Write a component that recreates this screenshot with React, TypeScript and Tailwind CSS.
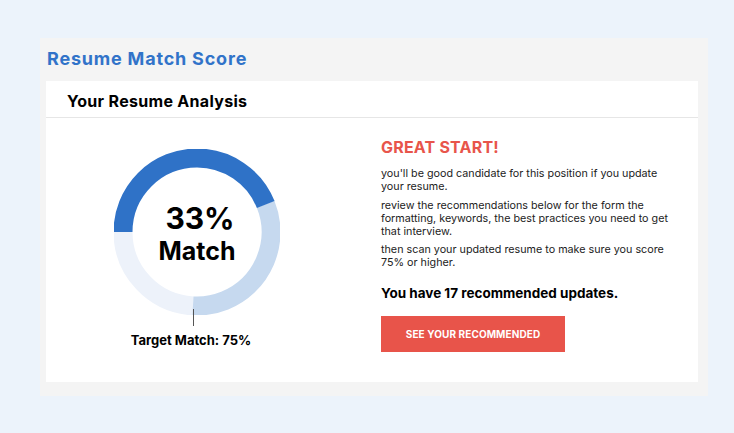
import React from "react"

const R = 74
const STROKE = 19
const C = 2 * Math.PI * R

function Arc({ from, to, color }: { from: number; to: number; color: string }) {
  const len = ((to - from) / 360) * C
  return (
    <circle
      cx={83}
      cy={83}
      r={R}
      fill="none"
      stroke={color}
      strokeWidth={STROKE}
      strokeDasharray={`${len} ${C}`}
      transform={`rotate(${from} 83 83)`}
    />
  )
}

function Donut() {
  return (
    <div className="relative w-[166px] h-[166px]">
      <svg width="166" height="166" viewBox="0 0 166 166">
        <Arc from={93} to={180} color="#edf2fa" />
        <Arc from={338} to={453} color="#c6d9ef" />
        <Arc from={180} to={338} color="#2f72c7" />
      </svg>
      <div className="absolute inset-0 flex flex-col items-center justify-center pt-[2px] font-bold text-black">
        <span className="text-[30px] leading-[36px] ml-[6px]">33%</span>
        <span className="text-[25px] leading-[30px]">Match</span>
      </div>
      <div className="absolute left-[79px] top-[160px] w-px h-[17px] bg-[#555]" />
    </div>
  )
}

export default function App() {
  return (
    <div className="w-[734px] h-[433px] bg-[#ecf3fb] pt-[38px] pl-[40px] font-['Inter',sans-serif]">
      <div className="w-[668px] h-[358px] bg-[#f4f4f4] pl-[6px] pt-[9px]">
        <h1 className="ml-[1px] text-[18px] leading-[24px] font-bold text-[#3173c9] tracking-[0.8px]">
          Resume Match Score
        </h1>
        <div className="mt-[10px] w-[652px] h-[301px] bg-white">
          <div className="h-[37px] border-b border-[#e6e6e6] pl-[21px] pt-[10px]">
            <h2 className="text-[16px] leading-[20px] font-bold text-black tracking-[0.3px]">Your Resume Analysis</h2>
          </div>
          <div className="flex">
            <div className="w-[300px] flex flex-col items-center pt-[31px]">
              <div className="ml-[2px]">
                <Donut />
              </div>
              <p className="mt-[17px] mr-[10px] text-[13px] leading-[16px] font-bold text-black">
                Target Match: 75%
              </p>
            </div>
            <div className="ml-[35px] w-[300px] pt-[19px]">
              <h3 className="text-[16px] leading-[20px] font-bold text-[#e8554b] tracking-[0.2px]">GREAT START!</h3>
              <div className="mt-[10px] flex flex-col gap-[5.5px] text-[10.75px] leading-[13px] text-[#222] whitespace-nowrap">
                <p>
                  you'll be good candidate for this position if you update
                  <br />
                  your resume.
                </p>
                <p>
                  review the recommendations below for the form the
                  <br />
                  formatting, keywords, the best practices you need to get
                  <br />
                  that interview.
                </p>
                <p>
                  then scan your updated resume to make sure you score
                  <br />
                  75% or higher.
                </p>
              </div>
              <p className="mt-[15px] text-[13.5px] leading-[18px] font-bold text-black">
                You have 17 recommended updates.
              </p>
              <button className="mt-[14px] w-[184px] h-[36px] bg-[#e8544a] text-white text-[10px] font-bold tracking-[0.1px]">
                SEE YOUR RECOMMENDED
              </button>
            </div>
          </div>
        </div>
      </div>
    </div>
  )
}
